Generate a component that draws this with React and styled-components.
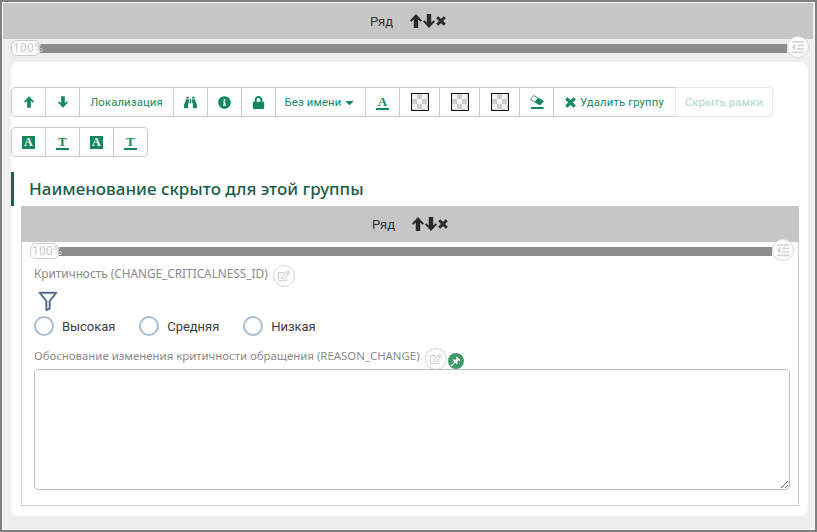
import React from "react";
import styled, { createGlobalStyle } from "styled-components";
import {
  FaBinoculars,
  FaInfoCircle,
  FaLock,
  FaCaretDown,
  FaOutdent,
  FaRegEdit,
} from "react-icons/fa";

const GREEN = "#13875f";
const GlobalStyle = createGlobalStyle`
  html, body {
    margin: 0;
    padding: 0;
    background: #fff;
  }
  body {
    font-family: "Roboto", "Liberation Sans", sans-serif;
  }
`;

const Frame = styled.div`
  box-sizing: border-box;
  width: 817px;
  height: 532px;
  border: 2px solid #7f7f7f;
  background: #eeeeee;
  box-shadow: inset 0 0 0 1px #f8f8f8;
  padding: 1px 2px 0 1px;
  display: flex;
  flex-direction: column;
`;

const RowBar = styled.div`
  flex: none;
  height: 36px;
  margin: ${(p) => p.$margin || 0};
  background: #c6c6c6;
  display: flex;
  align-items: center;
  justify-content: center;
  gap: 17px;
  color: #333;
  font-size: 13px;
`;

const BarIcons = styled.span`
  display: flex;
  align-items: center;
  color: #2b2b2b;
  gap: 1px;
`;

const Slider = styled.div`
  position: relative;
  flex: none;
  height: 23px;
  margin: ${(p) => p.$margin};
  display: flex;
  align-items: flex-start;
  padding-top: 5px;
  box-sizing: border-box;
`;

const SliderTrack = styled.div`
  flex: 1;
  height: 9px;
  background: #8c8c8c;
`;

const PercentKnob = styled.div`
  position: absolute;
  left: -29px;
  top: 1px;
  box-sizing: border-box;
  width: 29px;
  height: 16px;
  border: 1px solid #ccc;
  border-radius: 6px;
  background: #fff;
  color: #c8c8c8;
  font-size: 12px;
  letter-spacing: 0.3px;
  line-height: 14px;
  white-space: nowrap;
  padding-left: 1px;
`;

const MenuKnob = styled.div`
  position: absolute;
  right: -22px;
  top: -3px;
  box-sizing: border-box;
  width: 22px;
  height: 22px;
  border: 1px solid #d8d8d8;
  border-radius: 50%;
  background: #fff;
  color: #d4d4d4;
  font-size: 14px;
  display: flex;
  align-items: center;
  justify-content: center;
`;

const Card = styled.div`
  flex: 1;
  margin: 0 5px 14px 8px;
  background: #fff;
  border-radius: 8px;
  padding: 25px 0 0;
  display: flex;
  flex-direction: column;
  min-height: 0;
`;

const Toolbar = styled.div`
  display: flex;
  margin-bottom: 10px;
`;

const ToolButton = styled.div`
  box-sizing: border-box;
  flex: none;
  width: ${(p) => p.$w || 35}px;
  height: 30px;
  margin-right: -1px;
  border: 1px solid ${(p) => (p.$faded ? "#e6e6e6" : "#ccc")};
  background: #fff;
  color: ${(p) => (p.$faded ? "#a9d6c4" : GREEN)};
  font-size: 11.3px;
  display: flex;
  align-items: center;
  justify-content: center;
  gap: ${(p) => p.$gap || 0}px;
  letter-spacing: 0.15px;
  white-space: nowrap;
  border-radius: ${(p) =>
    p.$first ? "4px 0 0 4px" : p.$last ? "0 4px 4px 0" : "0"};
  svg {
    font-size: 13px;
  }
`;

const LetterIcon = styled.span`
  display: inline-block;
  font-family: "Liberation Serif", serif;
  font-weight: 700;
  font-size: 13px;
  line-height: 13px;
  width: 13px;
  text-align: center;
  color: ${GREEN};
  border-bottom: 2px solid ${GREEN};
`;

const FilledLetter = styled.span`
  display: inline-block;
  font-family: "Liberation Serif", serif;
  font-weight: 700;
  font-size: 12px;
  line-height: 13px;
  width: 13px;
  height: 13px;
  text-align: center;
  background: ${GREEN};
  color: #fff;
`;

const Checker = styled.span`
  box-sizing: border-box;
  width: 18px;
  height: 18px;
  border: 1.5px solid #111;
  background: repeating-conic-gradient(#cdcdcd 0 25%, #f4f4f4 0 50%) 0 0 / 10px 10px;
`;

const GroupTitle = styled.h2`
  margin: 5px 0 0;
  height: 34px;
  box-sizing: border-box;
  border-left: 3px solid #1b5e4b;
  padding-left: 15px;
  font-family: "Noto Sans", "Roboto", sans-serif;
  font-size: 17px;
  font-weight: 500;
  line-height: 34px;
  color: #1b5e4b;
`;

const Group = styled.div`
  flex: 1;
  margin: 0 9px 10px 10px;
  border: 1px solid #ccc;
  border-top: none;
  display: flex;
  flex-direction: column;
  min-height: 0;
`;

const FieldLabel = styled.div`
  display: flex;
  align-items: flex-start;
  font-family: "Noto Sans", "Roboto", sans-serif;
  color: #8a8a8a;
  font-size: ${(p) => p.$size}px;
  margin-left: 12px;
  height: ${(p) => p.$h}px;
  line-height: 16px;
`;

const EditBadge = styled.span`
  box-sizing: border-box;
  flex: none;
  width: 22px;
  height: 22px;
  margin: 0 0 0 5px;
  border: 1px solid #d4d4d4;
  border-radius: 50%;
  color: #cfcfcf;
  font-size: 12px;
  display: flex;
  align-items: center;
  justify-content: center;
`;

const PinBadge = styled.span`
  flex: none;
  width: 16px;
  height: 16px;
  margin: 5px 0 0 1px;
  border-radius: 50%;
  background: #3f9a6a;
  color: #fff;
  display: flex;
  align-items: center;
  justify-content: center;
`;

const FilterIcon = styled.svg`
  display: block;
  margin: 3px 0 5px 16px;
  flex: none;
`;

const RadioRow = styled.div`
  display: flex;
  margin: 0 0 12px 12px;
  height: 20px;
  gap: 24px;
`;

const RadioItem = styled.label`
  display: flex;
  align-items: center;
  gap: 8px;
  color: #3c3c3c;
  font-size: 13px;
  letter-spacing: -0.05px;
`;

const RadioDot = styled.span`
  box-sizing: border-box;
  width: 20px;
  height: 20px;
  border: 2px solid #a9bbcf;
  border-radius: 50%;
  background: #fff;
`;

const Memo = styled.textarea`
  box-sizing: border-box;
  display: block;
  flex: none;
  width: 756px;
  height: 121px;
  margin: 0 0 0 12px;
  border: 1px solid #bdbdbd;
  border-radius: 4px;
  background: #fff;
  outline: none;
`;

// font awesome 4 shapes, the react-icons ones are too thin at this size
const ArrowUp = ({ w = 10, h = 12 }) => (
  <svg width={w} height={h} viewBox="0 0 12 14" fill="currentColor">
    <path d="M6 0l6 6.4-1.3 1.4L8.2 5.6V14H3.8V5.6L1.3 7.8 0 6.4z" />
  </svg>
);

const ArrowDown = ({ w = 10, h = 12 }) => (
  <svg width={w} height={h} viewBox="0 0 12 14" fill="currentColor">
    <path d="M6 14L0 7.6l1.3-1.4 2.5 2.2V0h4.4v8.4l2.5-2.2L12 7.6z" />
  </svg>
);

const Cross = ({ size = 10 }) => (
  <svg width={size} height={size} viewBox="0 0 10 10" stroke="currentColor" strokeWidth="3">
    <path d="M1.2 1.2l7.6 7.6M8.8 1.2L1.2 8.8" />
  </svg>
);

const Eraser = () => (
  <svg width="14" height="15" viewBox="0 0 14 15" fill="currentColor">
    <path d="M3.5.5l10 5.5-3.5 4-9.5-5.5z" fill="#fff" stroke="currentColor" strokeWidth="0.8" />
    <path d="M8 3l5.5 3-3.5 4-5.5-3z" />
    <rect x="1" y="12" width="12.5" height="2" />
  </svg>
);

const Pin = () => (
  <svg width="11" height="11" viewBox="0 0 10 10" fill="none" stroke="currentColor">
    <path d="M.8 9.2L4.5 5.5" strokeWidth="1" />
    <path d="M3 3.2l3.8 3.8" strokeWidth="1.3" />
    <path d="M4.6 5.4l2.4-2.4" strokeWidth="2.2" />
    <path d="M5.8 1l3.2 3.2" strokeWidth="1.3" />
  </svg>
);

const tools = [
  { w: 35, first: true, icon: <ArrowUp /> },
  { w: 35, icon: <ArrowDown /> },
  { w: 95, text: "Локализация" },
  { w: 35, icon: <FaBinoculars /> },
  { w: 35, icon: <FaInfoCircle /> },
  { w: 35, icon: <FaLock /> },
  { w: 91, gap: 2, text: "Без имени", icon: <FaCaretDown />, after: true },
  { w: 35, icon: <LetterIcon>A</LetterIcon> },
  { w: 41, icon: <Checker /> },
  { w: 41, icon: <Checker /> },
  { w: 41, icon: <Checker /> },
  { w: 35, icon: <Eraser /> },
  { w: 123, gap: 4, text: "Удалить группу", icon: <Cross size={11} /> },
  { w: 98, last: true, faded: true, text: "Скрыть рамки" },
];

const textTools = [
  { first: true, icon: <FilledLetter>A</FilledLetter> },
  { icon: <LetterIcon>T</LetterIcon> },
  { icon: <FilledLetter>A</FilledLetter> },
  { last: true, icon: <LetterIcon>T</LetterIcon> },
];

function ToolRow({ items }) {
  return (
    <Toolbar>
      {items.map((t, i) => (
        <ToolButton
          key={i}
          $w={t.w}
          $gap={t.gap}
          $first={t.first}
          $last={t.last}
          $faded={t.faded}
        >
          {!t.after && t.icon}
          {t.text}
          {t.after && t.icon}
        </ToolButton>
      ))}
    </Toolbar>
  );
}

function RowHeader({ margin }) {
  return (
    <RowBar $margin={margin}>
      <span>Ряд</span>
      <BarIcons>
        <ArrowUp w={12} h={14} />
        <ArrowDown w={12} h={14} />
        <Cross />
      </BarIcons>
    </RowBar>
  );
}

function WidthSlider({ margin }) {
  return (
    <Slider $margin={margin}>
      <PercentKnob>100%</PercentKnob>
      <SliderTrack />
      <MenuKnob>
        <FaOutdent />
      </MenuKnob>
    </Slider>
  );
}

export default function App() {
  return (
    <>
      <GlobalStyle />
      <Frame>
        <RowHeader />
        <WidthSlider margin="0 26px 0 37px" />
        <Card>
          <ToolRow items={tools} />
          <ToolRow items={textTools} />
          <GroupTitle>Наименование скрыто для этой группы</GroupTitle>
          <Group>
            <RowHeader margin="0 -1px" />
            <WidthSlider margin="0 26px 0 37px" />
            <FieldLabel $size={11.8} $h={23}>
              Критичность (CHANGE_CRITICALNESS_ID)
              <EditBadge>
                <FaRegEdit />
              </EditBadge>
            </FieldLabel>
            <FilterIcon width="20" height="20" viewBox="0 0 24 24" fill="none" stroke="#56708c" strokeWidth="2.4" strokeLinejoin="round">
              <path d="M2 2h20l-8 10v9l-4 2V12z" />
            </FilterIcon>
            <RadioRow>
              <RadioItem>
                <RadioDot />
                Высокая
              </RadioItem>
              <RadioItem>
                <RadioDot />
                Средняя
              </RadioItem>
              <RadioItem>
                <RadioDot />
                Низкая
              </RadioItem>
            </RadioRow>
            <FieldLabel $size={11.4} $h={21}>
              Обоснование изменения критичности обращения (REASON_CHANGE)
              <EditBadge>
                <FaRegEdit />
              </EditBadge>
              <PinBadge>
                <Pin />
              </PinBadge>
            </FieldLabel>
            <Memo />
          </Group>
        </Card>
      </Frame>
    </>
  );
}
